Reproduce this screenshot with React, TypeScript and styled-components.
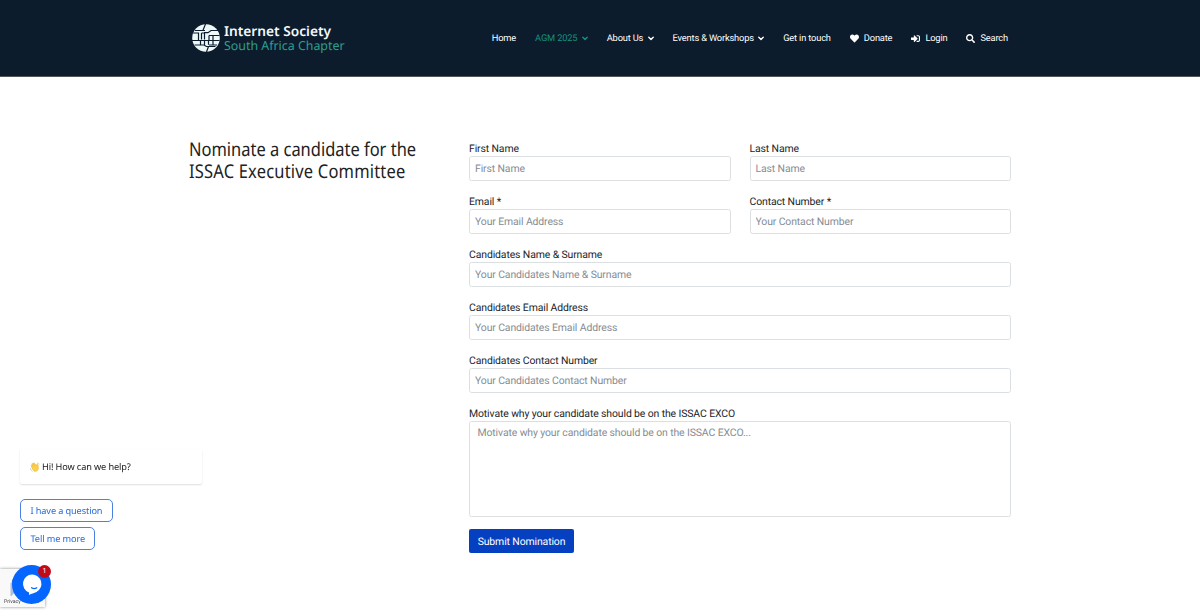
import React from 'react';
import styled, { createGlobalStyle } from 'styled-components';
import { FaHeart, FaSearch, FaSignInAlt } from 'react-icons/fa';

const GlobalStyle = createGlobalStyle`
  * { box-sizing: border-box; }
  html, body { margin: 0; background: #fff; }
  body { font-family: Roboto, sans-serif; color: #212529; height: 616px; overflow: hidden; text-rendering: geometricPrecision; }
  input, textarea, button { text-rendering: inherit; }
`;

const Header = styled.header`
  height: 77px;
  background: #0c1c2c;
  border-bottom: 1px solid #4a5663;
`;

const HeaderInner = styled.div`
  width: 822px;
  height: 76px;
  margin: 0 auto;
  padding: 0 3px;
  display: flex;
  align-items: center;
  justify-content: space-between;
`;

const Brand = styled.div`
  display: flex;
  align-items: center;
  gap: 4px;
`;

const BrandText = styled.div`
  display: flex;
  flex-direction: column;
  padding-top: 2px;
  font-family: "Noto Sans", sans-serif;
  white-space: nowrap;
`;

const BrandLine = styled.span<{ $accent?: boolean }>`
  font-size: ${p => (p.$accent ? 12.4 : 13.7)}px;
  line-height: 14px;
  font-weight: ${p => (p.$accent ? 400 : 600)};
  color: ${p => (p.$accent ? '#2f9c8f' : '#f4f8fa')};
`;

const Nav = styled.nav`
  display: flex;
  gap: 19px;
`;

const NavItem = styled.a<{ $menu?: boolean; $active?: boolean }>`
  display: flex;
  align-items: center;
  gap: ${p => (p.$menu ? 4.3 : 5)}px;
  font-size: 9.3px;
  letter-spacing: -0.17px;
  line-height: 15px;
  padding-top: 1px;
  white-space: nowrap;
  color: ${p => (p.$active ? '#14917f' : '#fff')};
  svg { flex: none; margin-top: -1px; }
`;

const Main = styled.main`
  width: 822px;
  margin: 0 auto;
  padding-top: 63px;
  display: flex;
`;

const Side = styled.section`
  width: 280px;
  flex: none;
`;

const Title = styled.h1`
  margin: -2px 0 0;
  font: 400 19px/22px "Noto Sans", sans-serif;
  color: #212121;
  white-space: nowrap;
  transform: scaleX(0.866);
  transform-origin: left;
`;

const TitleLine = styled.span<{ $spacing: number }>`
  display: block;
  letter-spacing: ${p => p.$spacing}px;
`;

const Form = styled.form`
  width: 542px;
  display: grid;
  grid-template-columns: 1fr 1fr;
  column-gap: 19px;
  row-gap: 12px;
`;

const Field = styled.label<{ $wide?: boolean }>`
  display: flex;
  flex-direction: column;
  grid-column: ${p => (p.$wide ? '1 / -1' : 'auto')};
  font-size: 10.45px;
  letter-spacing: -0.12px;
`;

const Caption = styled.span`
  height: 16px;
  padding-top: 1px;
  line-height: 15px;
`;

const Input = styled.input`
  height: 25px;
  width: 100%;
  padding: 0 5px 1px;
  border: 1px solid #dcdfe2;
  border-radius: 2.5px;
  font: 400 10.45px Roboto, sans-serif;
  letter-spacing: -0.12px;
  outline: none;
  &::placeholder { color: #868c93; opacity: 1; }
`;

const TextArea = styled.textarea`
  height: 96px;
  width: 100%;
  padding: 3px 7.5px;
  border: 1px solid #dcdfe2;
  border-radius: 2.5px;
  font: 400 10.45px/16px Roboto, sans-serif;
  letter-spacing: -0.12px;
  resize: none;
  outline: none;
  &::placeholder { color: #868c93; opacity: 1; }
`;

const Submit = styled.button`
  justify-self: start;
  width: 105px;
  height: 24px;
  padding: 0;
  border: 0;
  border-radius: 2px;
  background: #0540c0;
  color: #fff;
  font: 400 10.45px Roboto, sans-serif;
  letter-spacing: -0.12px;
`;

const Chat = styled.aside`
  position: fixed;
  left: 20px;
  top: 449px;
  width: 182px;
  display: flex;
  flex-direction: column;
  align-items: flex-start;
  gap: 5px;
  font-family: "Noto Sans", sans-serif;
`;

const Greeting = styled.div`
  width: 182px;
  height: 35px;
  margin-bottom: 10px;
  padding: 0 10px;
  display: flex;
  align-items: center;
  gap: 2px;
  border-radius: 2px;
  background: #fff;
  box-shadow: 0 1px 2px rgba(0, 0, 0, 0.13);
  font-size: 9.2px;
  letter-spacing: -0.12px;
  color: #1b1b1b;
`;

const Reply = styled.button`
  height: 23px;
  padding: 0 9.5px;
  border: 1px solid #4c80e2;
  border-radius: 5px;
  background: #fff;
  color: #246bdd;
  font: 400 9.2px "Noto Sans", sans-serif;
  letter-spacing: -0.12px;
  white-space: nowrap;
`;

const Recaptcha = styled.div`
  position: fixed;
  left: 0;
  top: 569px;
  width: 45px;
  height: 38px;
  padding: 0 0 1px 4px;
  display: flex;
  align-items: flex-end;
  background: #f9f9f9;
  box-shadow: 0 0 3px #8a8a8a;
  font: 400 5.2px/7px Roboto, sans-serif;
  color: #444;
  white-space: nowrap;
`;

const RecaptchaMark = styled.svg`
  position: absolute;
  left: 10px;
  top: 3px;
`;

const Launcher = styled.div`
  position: fixed;
  left: 12px;
  top: 565px;
  width: 39px;
  height: 39px;
  border-radius: 50%;
  background: #0566ff;
`;

const Badge = styled.span`
  position: absolute;
  left: 26px;
  top: 0;
  width: 13px;
  height: 13px;
  border-radius: 50%;
  background: #c30b17;
  color: #fff;
  font: 400 7px/13px "Noto Sans", sans-serif;
  text-align: center;
`;

const Chevron = () => (
  <svg width="6" height="5" viewBox="0 0 6 5">
    <path d="M.8 1.2 3 3.4 5.2 1.2" fill="none" stroke="currentColor" strokeWidth="1.4" strokeLinecap="round" strokeLinejoin="round" />
  </svg>
);

const Globe = () => (
  <svg width="28" height="28" viewBox="0 0 28 28">
    <circle cx="14" cy="14" r="13.8" fill="#eef7f8" />
    <g fill="none" stroke="#0c1c2c" strokeWidth="1.2">
      <path d="M13.5 0 11 6.3M3 6.5h10M12 8.7h4l3-2.2h7M1 9h5.5v7M9.5 9v6.5M12.5 8.7v6.8M9.5 9h3M17 11.5h10.5M17 11.5v4.5M21 11.5v4.5M0 16.5h27.5M8.5 16.5v4.3M12.5 16.5v4.3M16.5 16.5v4.3M21 16.5v4.3M2.5 21h9.5l2.5 1.5M17 21h8M14.5 22.5h9M16.5 22.5 14.5 28" />
    </g>
  </svg>
);

const Wave = () => (
  <svg width="10" height="10" viewBox="0 0 20 20">
    <path d="M4 11 2.7 7.8c-.4-1.2 1-1.8 1.6-.8L6 9 4 4.5c-.5-1.3 1.1-2 1.8-.9L9 8 7 3c-.4-1.3 1.2-1.8 1.9-.6l4 6.2.6-3.3c.2-1.4 2-1.2 2.1.1l.8 5.1c.8 4-1.4 7.5-5 8-3 .5-5-1.1-7.4-7.5Z" fill="#fbd04a" stroke="#f3c445" strokeWidth="2" />
    <path d="M1 12c0 3 1.6 5.5 4 6.7M14 1.5c2 .3 3.7 1.6 4.3 3.5" fill="none" stroke="#b9c3cb" strokeWidth="1.4" />
  </svg>
);

const links = [
  { text: 'Home' },
  { text: 'AGM 2025', menu: true, active: true },
  { text: 'About Us', menu: true },
  { text: 'Events & Workshops', menu: true },
  { text: 'Get in touch' },
  { text: 'Donate', icon: <FaHeart size={9} /> },
  { text: 'Login', icon: <FaSignInAlt size={9} /> },
  { text: 'Search', icon: <FaSearch size={9} /> },
];

const fields = [
  { label: 'First Name', hint: 'First Name' },
  { label: 'Last Name', hint: 'Last Name' },
  { label: 'Email *', hint: 'Your Email Address' },
  { label: 'Contact Number *', hint: 'Your Contact Number' },
  { label: 'Candidates Name & Surname', hint: 'Your Candidates Name & Surname', wide: true },
  { label: 'Candidates Email Address', hint: 'Your Candidates Email Address', wide: true },
  { label: 'Candidates Contact Number', hint: 'Your Candidates Contact Number', wide: true },
];

export default function App() {
  return (
    <>
      <GlobalStyle />
      <Header>
        <HeaderInner>
          <Brand>
            <Globe />
            <BrandText>
              <BrandLine>Internet Society</BrandLine>
              <BrandLine $accent>South Africa Chapter</BrandLine>
            </BrandText>
          </Brand>
          <Nav>
            {links.map(l => (
              <NavItem key={l.text} $menu={l.menu} $active={l.active}>
                {l.icon}
                {l.text}
                {l.menu && <Chevron />}
              </NavItem>
            ))}
          </Nav>
        </HeaderInner>
      </Header>
      <Main>
        <Side>
          <Title>
            <TitleLine $spacing={0}>Nominate a candidate for the</TitleLine>
            <TitleLine $spacing={0.24}>ISSAC Executive Committee</TitleLine>
          </Title>
        </Side>
        <Form>
          {fields.map(f => (
            <Field key={f.label} $wide={f.wide}>
              <Caption>{f.label}</Caption>
              <Input placeholder={f.hint} />
            </Field>
          ))}
          <Field $wide>
            <Caption>Motivate why your candidate should be on the ISSAC EXCO</Caption>
            <TextArea placeholder="Motivate why your candidate should be on the ISSAC EXCO..." />
          </Field>
          <Submit type="button">Submit Nomination</Submit>
        </Form>
      </Main>
      <Chat>
        <Greeting><Wave />Hi! How can we help?</Greeting>
        <Reply>I have a question</Reply>
        <Reply>Tell me more</Reply>
      </Chat>
      <Recaptcha>
        <RecaptchaMark width="24" height="24" viewBox="0 0 24 24">
          <path d="M3 12a9 9 0 0 1 9-9" fill="none" stroke="#3c78d8" strokeWidth="3" />
          <path d="M2.5 11v9l3-3 4 4" fill="none" stroke="#aebfd8" strokeWidth="4" />
        </RecaptchaMark>
        Privacy - Terms
      </Recaptcha>
      <Launcher>
        <svg width="39" height="39" viewBox="0 0 39 39">
          <path d="M20 9.5a9.3 9.3 0 0 1 4.5 17.5c-2.5 1.5-5 1.3-7.5 3v-2.5A9.3 9.3 0 0 1 20 9.5Z" fill="#fff" />
          <path d="M19.5 22.8c1.8 1 3.8 1 5.2 0" fill="none" stroke="#0566ff" strokeWidth="1.3" strokeLinecap="round" />
        </svg>
        <Badge>1</Badge>
      </Launcher>
    </>
  );
}
